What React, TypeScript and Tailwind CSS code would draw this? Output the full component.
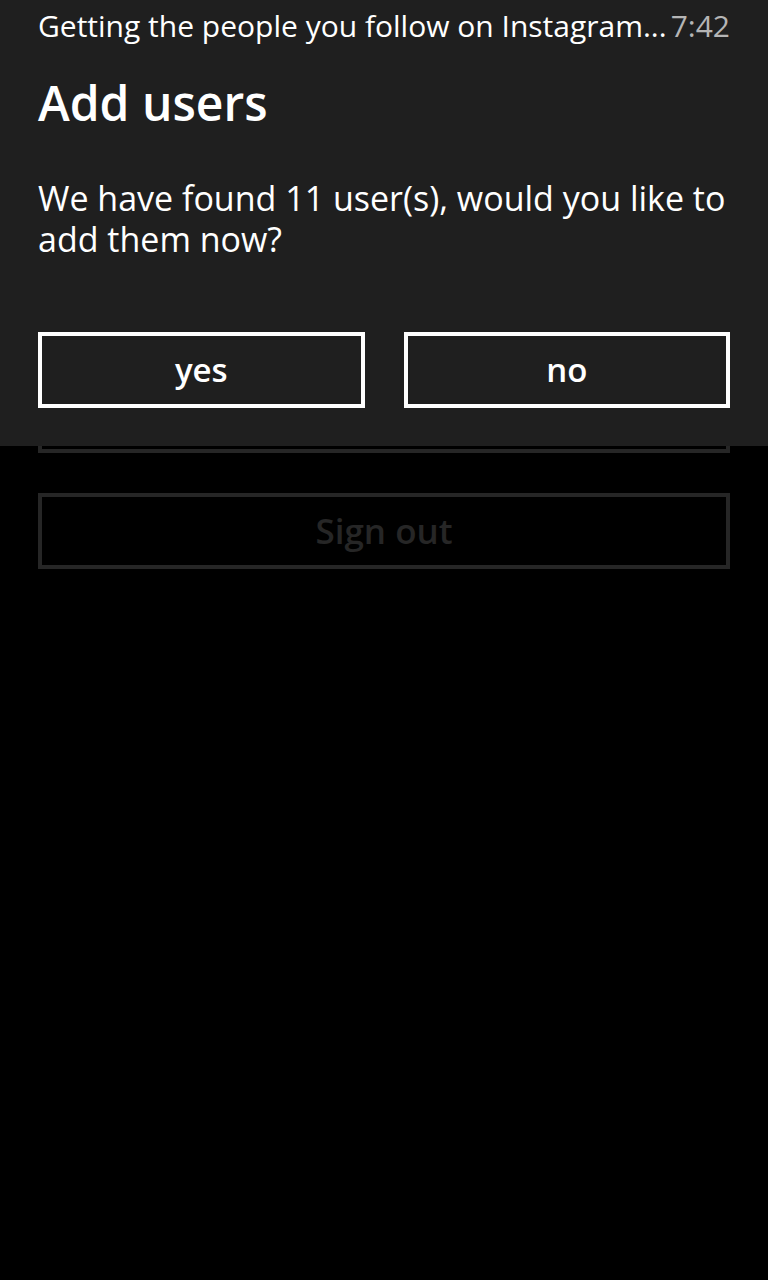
export default function App() {
  return (
    <main
      className="relative min-h-[1280px] w-full bg-black text-white"
      style={{ fontFamily: '"Open Sans", "Noto Sans", sans-serif' }}
    >
      {/* page behind the message box */}
      <div className="flex flex-col gap-[40px] px-[38px] pt-[377px]">
        <div className="h-[76px] border-[4px] border-[#262626]"></div>
        <div className="flex h-[76px] items-center justify-center border-[4px] border-[#262626] text-[35px] font-semibold text-[#262626]">
          Sign out
        </div>
      </div>

      {/* message box */}
      <div className="absolute left-0 top-0 h-[446px] w-full bg-[#1f1f1f] px-[38px]">
        <div className="flex items-center justify-between pt-[6px] text-[30px] leading-[40px]">
          <span className="truncate text-white">Getting the people you follow on Instagram...</span>
          <span className="shrink-0 text-[#b5b5b5]">7:42</span>
        </div>
        <h1 className="mt-[27px] text-[48px] font-semibold leading-[60px]">Add users</h1>
        <p className="mt-[45px] text-[34px] leading-[41px]">
          We have found 11 user(s), would you like to add them now?
        </p>
        <div className="mt-[72px] grid grid-cols-2 gap-[39px]">
          <button className="flex h-[76px] items-center justify-center border-[4px] border-white text-[33px] font-semibold">
            yes
          </button>
          <button className="flex h-[76px] items-center justify-center border-[4px] border-white text-[33px] font-semibold">
            no
          </button>
        </div>
      </div>
    </main>
  );
}
